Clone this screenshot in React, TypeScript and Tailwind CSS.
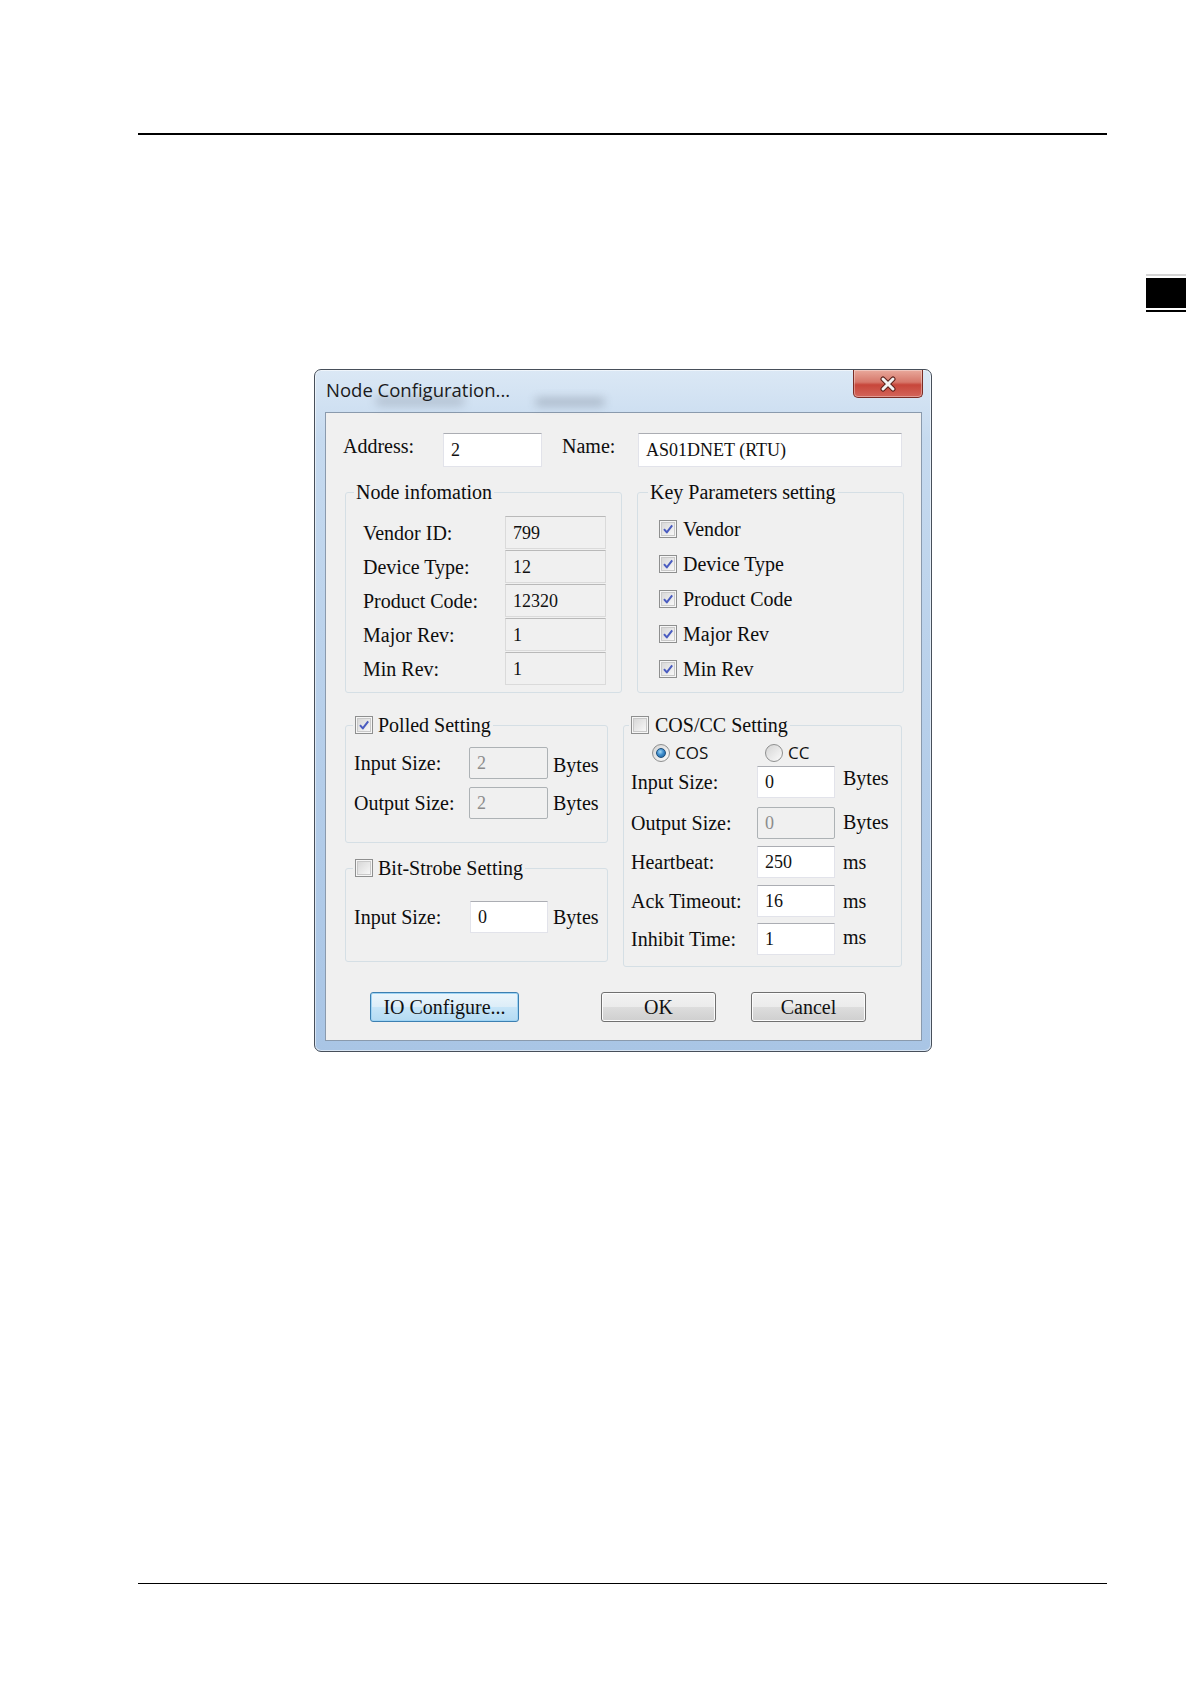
import React from 'react';

// Win7 style "Node Configuration" dialog on a printed manual page

const SERIF = "font-['Liberation_Serif','Times_New_Roman',serif]";

type FieldVariant = 'white' | 'readonly' | 'disabled';

const CheckBox: React.FC<{ checked?: boolean }> = ({ checked = false }) => (
    <span className="flex h-[18px] w-[18px] shrink-0 items-center justify-center border border-[#8e8f8f] bg-[#f6f6f6]">
        <span className="flex h-[14px] w-[14px] items-center justify-center border border-[#c9c9c9] bg-[linear-gradient(135deg,#d8d8d8,#f7f7f7)]">
            {checked && (
                <svg width="12" height="12" viewBox="0 0 12 12">
                    <path d="M2 6.2 L4.8 9.4 L10.2 2.4" fill="none" stroke="#4a5cc0" strokeWidth="2" strokeLinejoin="round" />
                </svg>
            )}
        </span>
    </span>
);

const Radio: React.FC<{ selected?: boolean }> = ({ selected = false }) => (
    <span className="flex h-[18px] w-[18px] shrink-0 items-center justify-center rounded-full border border-[#8e8f8f] bg-[linear-gradient(135deg,#d4d4d4,#fbfbfb)]">
        {selected && (
            <span className="h-[10px] w-[10px] rounded-full border border-[#1c4f7d] bg-[radial-gradient(circle_at_40%_35%,#a5d9f5_0%,#3d8ccc_45%,#1b5a94_100%)]" />
        )}
    </span>
);

const Field: React.FC<{ value: string; className: string; variant?: FieldVariant }> = ({ value, className, variant = 'white' }) => {
    const look =
        variant === 'white'
            ? 'bg-white border border-[#e2e3ea] border-t-[#abadb3] text-[#111]'
            : variant === 'readonly'
              ? 'bg-[#f0f0f0] border border-[#dadada] border-t-[#b9b9b9] text-[#111]'
              : 'bg-[#f0f0f0] border border-[#adb2b5] rounded-[2px] text-[#8c8c8c]';
    return (
        <div className={`flex shrink-0 items-center pl-[7px] text-[18px] leading-none ${look} ${className}`}>
            {value}
        </div>
    );
};

const Label: React.FC<{ text: string; className: string }> = ({ text, className }) => (
    <span className={`shrink-0 text-[20px] leading-[22px] text-[#0d0d0d] ${className}`}>{text}</span>
);

const NODE_INFO = [
    { label: 'Vendor ID:', value: '799' },
    { label: 'Device Type:', value: '12' },
    { label: 'Product Code:', value: '12320' },
    { label: 'Major Rev:', value: '1' },
    { label: 'Min Rev:', value: '1' },
];

const KEY_PARAMS = ['Vendor', 'Device Type', 'Product Code', 'Major Rev', 'Min Rev'];

const COS_ROWS = [
    { label: 'Input Size:', value: '0', unit: 'Bytes', variant: 'white' as FieldVariant, mt: 'mt-[3px]', unitPos: 'mb-[8px]' },
    { label: 'Output Size:', value: '0', unit: 'Bytes', variant: 'disabled' as FieldVariant, mt: 'mt-[9px]', unitPos: 'mb-[2px]' },
    { label: 'Heartbeat:', value: '250', unit: 'ms', variant: 'white' as FieldVariant, mt: 'mt-[7px]', unitPos: '' },
    { label: 'Ack Timeout:', value: '16', unit: 'ms', variant: 'white' as FieldVariant, mt: 'mt-[7px]', unitPos: '' },
    { label: 'Inhibit Time:', value: '1', unit: 'ms', variant: 'white' as FieldVariant, mt: 'mt-[6px]', unitPos: 'mb-[4px]' },
];

const GROUP = 'rounded-[3px] border border-[#d5dfe5] p-0 m-0';

const Win7Button: React.FC<{ text: string; isDefault?: boolean; className: string }> = ({ text, isDefault = false, className }) => (
    <button
        className={`flex h-[30px] items-center justify-center rounded-[3px] border text-[20px] leading-none text-[#111] ${
            isDefault
                ? 'border-[#3c7fb1] bg-[linear-gradient(#ecf6fc_0%,#dcedf8_50%,#c7e5f8_50%,#b4dbf3_100%)] shadow-[inset_0_0_0_1px_#9fd4f4]'
                : 'border-[#707070] bg-[linear-gradient(#f2f2f2_0%,#ebebeb_50%,#dddddd_50%,#cfcfcf_100%)] shadow-[inset_0_0_0_1px_#fcfcfc]'
        } ${className}`}
    >
        {text}
    </button>
);

const NodeConfigDialog: React.FC = () => (
    <div className="ml-[314px] flex h-[683px] w-[618px] flex-col overflow-hidden rounded-[7px] border border-[#474f5a] bg-[linear-gradient(180deg,#dbe8f5_0%,#c6daef_10%,#b4cde9_60%,#a9c5e5_100%)] shadow-[inset_0_0_0_1px_rgba(255,255,255,0.55)]">
        {/* タイトルバー */}
        <div className="relative flex h-[42px] shrink-0 items-start justify-between pl-[11px] pr-[8px]">
            <span className="absolute left-[60px] top-[26px] h-[10px] w-[90px] rounded-full bg-[#5a6270] opacity-25 blur-[5px]" />
            <span className="absolute left-[220px] top-[28px] h-[8px] w-[70px] rounded-full bg-[#4a5260] opacity-30 blur-[5px]" />
            <span className="relative mt-[8px] font-['Segoe_UI','Open_Sans',sans-serif] text-[18.5px] leading-[24px] text-[#1b1b1b]">
                Node Configuration...
            </span>
            <div className="relative flex h-[28px] w-[70px] items-center justify-center rounded-b-[5px] border border-t-0 border-[#7a2c24] bg-[linear-gradient(#e9a99c_0%,#d6776a_45%,#c7463a_55%,#d3655a_100%)] shadow-[inset_0_0_0_1px_rgba(255,255,255,0.35)]">
                <svg width="22" height="16" viewBox="0 0 22 16">
                    <path d="M6 3 L16 13 M16 3 L6 13" stroke="#5a2019" strokeWidth="5" strokeLinecap="round" />
                    <path d="M6 3 L16 13 M16 3 L6 13" stroke="#f2f2f2" strokeWidth="3" strokeLinecap="round" />
                </svg>
            </div>
        </div>

        {/* クライアント領域 */}
        <div className={`ml-[10px] mr-[9px] h-[629px] shrink-0 border border-[#8a9aad] bg-[#f0f0f0] ${SERIF}`}>
            {/* Address / Name */}
            <div className="mt-[20px] flex items-center pl-[17px]">
                <Label text="Address:" className="mb-[8px] w-[100px]" />
                <Field value="2" variant="white" className="h-[34px] w-[99px]" />
                <Label text="Name:" className="mb-[8px] ml-[20px] w-[76px]" />
                <Field value="AS01DNET (RTU)" variant="white" className="h-[34px] w-[264px]" />
            </div>

            {/* Node infomation / Key Parameters */}
            <div className="mt-[14px] flex gap-[15px] pl-[19px]">
                <fieldset className={`${GROUP} h-[212px] w-[277px]`}>
                    <legend className="ml-[8px] px-[2px] text-[20px] leading-[22px] text-[#0d0d0d]">Node infomation</legend>
                    <div className="mt-[13px] flex flex-col gap-[1px] pl-[17px]">
                        {NODE_INFO.map(row => (
                            <div key={row.label} className="flex h-[33px] items-center">
                                <Label text={row.label} className="w-[142px]" />
                                <Field value={row.value} variant="readonly" className="h-[33px] w-[101px]" />
                            </div>
                        ))}
                    </div>
                </fieldset>

                <fieldset className={`${GROUP} h-[212px] w-[267px]`}>
                    <legend className="ml-[10px] px-[2px] text-[20px] leading-[22px] text-[#0d0d0d]">Key Parameters setting</legend>
                    <div className="mt-[8px] flex flex-col pl-[21px]">
                        {KEY_PARAMS.map(name => (
                            <div key={name} className="flex h-[35px] items-center gap-[6px]">
                                <CheckBox checked />
                                <Label text={name} className="" />
                            </div>
                        ))}
                    </div>
                </fieldset>
            </div>

            {/* Polled / Bit-Strobe / COS */}
            <div className="mt-[21px] flex gap-[15px] pl-[19px]">
                <div className="flex w-[263px] flex-col gap-[14px]">
                    <fieldset className={`${GROUP} h-[129px] w-[263px]`}>
                        <legend className="ml-[7px] flex items-center gap-[5px] px-[2px]">
                            <CheckBox checked />
                            <Label text="Polled Setting" className="" />
                        </legend>
                        <div className="mt-[11px] flex flex-col gap-[8px] pl-[8px]">
                            <div className="flex h-[32px] items-center">
                                <Label text="Input Size:" className="w-[115px]" />
                                <Field value="2" variant="disabled" className="h-[32px] w-[79px]" />
                                <Label text="Bytes" className="ml-[5px] mt-[4px]" />
                            </div>
                            <div className="flex h-[32px] items-center">
                                <Label text="Output Size:" className="w-[115px]" />
                                <Field value="2" variant="disabled" className="h-[32px] w-[79px]" />
                                <Label text="Bytes" className="ml-[5px]" />
                            </div>
                        </div>
                    </fieldset>

                    <fieldset className={`${GROUP} h-[105px] w-[263px]`}>
                        <legend className="ml-[7px] flex items-center gap-[5px] px-[2px]">
                            <CheckBox />
                            <Label text="Bit-Strobe Setting" className="" />
                        </legend>
                        <div className="mt-[22px] flex h-[32px] items-center pl-[8px]">
                            <Label text="Input Size:" className="w-[116px]" />
                            <Field value="0" variant="white" className="h-[32px] w-[78px]" />
                            <Label text="Bytes" className="ml-[5px]" />
                        </div>
                    </fieldset>
                </div>

                <fieldset className={`${GROUP} h-[253px] w-[279px]`}>
                    <legend className="ml-[5px] flex items-center gap-[6px] px-[2px]">
                        <CheckBox />
                        <Label text="COS/CC Setting" className="" />
                    </legend>
                    <div className="mt-[7px] flex h-[20px] items-center pl-[28px]">
                        <div className="flex w-[113px] items-center gap-[5px]">
                            <Radio selected />
                            <span className="font-['Segoe_UI','Open_Sans',sans-serif] text-[17px] leading-[20px] text-[#111]">COS</span>
                        </div>
                        <div className="flex items-center gap-[5px]">
                            <Radio />
                            <span className="font-['Segoe_UI','Open_Sans',sans-serif] text-[17px] leading-[20px] text-[#111]">CC</span>
                        </div>
                    </div>
                    {COS_ROWS.map(row => (
                        <div key={row.label} className={`flex h-[32px] items-center pl-[7px] ${row.mt}`}>
                            <Label text={row.label} className="w-[126px]" />
                            <Field value={row.value} variant={row.variant} className="h-[32px] w-[78px]" />
                            <Label text={row.unit} className={`ml-[8px] ${row.unitPos}`} />
                        </div>
                    ))}
                </fieldset>
            </div>

            {/* ボタン */}
            <div className="mt-[25px] flex pl-[44px]">
                <Win7Button text="IO Configure..." isDefault className="w-[149px]" />
                <Win7Button text="OK" className="ml-[82px] w-[115px]" />
                <Win7Button text="Cancel" className="ml-[35px] w-[115px]" />
            </div>
        </div>
    </div>
);

export default function App() {
    return (
        <div className="h-[1684px] w-[1191px] overflow-hidden bg-white">
            {/* ヘッダー罫線 */}
            <div className="pl-[138px] pt-[133px]">
                <div className="h-[2px] w-[969px] bg-black" />
            </div>

            {/* 右端のタブ */}
            <div className="mt-[139px] flex justify-end pr-[5px]">
                <div className="flex w-[40px] flex-col">
                    <div className="h-[2px] bg-[#d4d4d4]" />
                    <div className="mt-[2px] h-[30px] bg-black" />
                    <div className="mt-[2px] h-[2px] bg-black" />
                </div>
            </div>

            <div className="mt-[57px]">
                <NodeConfigDialog />
            </div>

            {/* フッター罫線 */}
            <div className="mt-[531px] pl-[138px]">
                <div className="h-[1px] w-[969px] bg-black" />
            </div>
        </div>
    );
}
